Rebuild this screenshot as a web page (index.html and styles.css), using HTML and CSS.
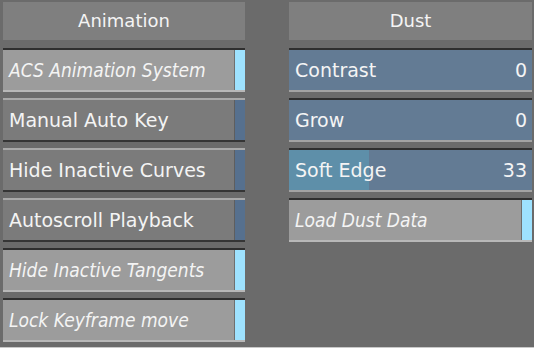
FILE: index.html
```html
<!DOCTYPE html>
<html lang="en">
<head>
    <meta charset="UTF-8">
    <meta name="viewport" content="width=device-width, initial-scale=1.0">
    <title>Animation / Dust</title>
    <link rel="stylesheet" href="styles.css">
</head>
<body>

<div class="panels">
    <div class="column">
        <div class="header">Animation</div>
        <div class="toggle on"><span class="label">ACS Animation System</span><span class="led"></span></div>
        <div class="toggle"><span class="label">Manual Auto Key</span><span class="led"></span></div>
        <div class="toggle"><span class="label">Hide Inactive Curves</span><span class="led"></span></div>
        <div class="toggle"><span class="label">Autoscroll Playback</span><span class="led"></span></div>
        <div class="toggle on"><span class="label">Hide Inactive Tangents</span><span class="led"></span></div>
        <div class="toggle on"><span class="label">Lock Keyframe move</span><span class="led"></span></div>
    </div>

    <div class="column">
        <div class="header">Dust</div>
        <div class="field"><span class="label">Contrast</span><span class="value">0</span></div>
        <div class="field"><span class="label">Grow</span><span class="value">0</span></div>
        <div class="field">
            <span class="fill" style="width: 33%"></span>
            <span class="label">Soft Edge</span><span class="value">33</span>
        </div>
        <div class="toggle on"><span class="label">Load Dust Data</span><span class="led"></span></div>
    </div>
</div>

</body>
</html>
```

FILE: styles.css
```css
/* panel layout */
body {
    margin: 0;
    min-height: 348px;
    box-sizing: border-box;
    border-bottom: 1px solid #c9c9c9;
    background-color: #6b6b6b;
    font-family: "DejaVu Sans", sans-serif;
    color: #f4f4f4;
}
.panels {
    display: flex;
    gap: 44px;
    padding: 2px 2px 0 3px;
}
.column {
    width: 242px;
    display: flex;
    flex-direction: column;
    gap: 6px;
}
.column + .column {
    width: 243px;
}
.header {
    height: 38px;
    margin-bottom: 2px;
    background-color: #7f7f7f;
    font-size: 18px;
    line-height: 38px;
    text-align: center;
}

/* toggle buttons */
.toggle {
    height: 40px;
    display: flex;
    align-items: center;
    background-color: #7b7b7b;
    border-top: 2px solid #a9a9a9;
    border-bottom: 2px solid #353535;
    font-size: 19px;
}
.toggle .label {
    flex: 1;
    padding-left: 6px;
}
.toggle .led {
    width: 10px;
    align-self: stretch;
    background-color: #56708e;
    border-left: 1px solid #5e5e5e;
}
.toggle.on {
    background-color: #9c9c9c;
    border-top-color: #2f2f2f;
    border-bottom-color: #b8b8b8;
    font-family: "DejaVu Sans Condensed", "DejaVu Sans", sans-serif;
    font-style: italic;
}
.toggle.on .led {
    background-color: #9ee2ff;
    border-left-color: #6f6f6f;
}

/* numeric fields */
.field {
    position: relative;
    height: 40px;
    display: flex;
    align-items: center;
    background-color: #637b94;
    border-top: 2px solid #2f2f2f;
    border-bottom: 2px solid #a3a3a3;
    font-size: 19px;
}
.field .fill {
    position: absolute;
    left: 0;
    top: 0;
    bottom: 0;
    background-color: #5e8fa9;
}
.field .label {
    position: relative;
    flex: 1;
    padding-left: 6px;
}
.field .value {
    position: relative;
    padding-right: 5px;
}
```
